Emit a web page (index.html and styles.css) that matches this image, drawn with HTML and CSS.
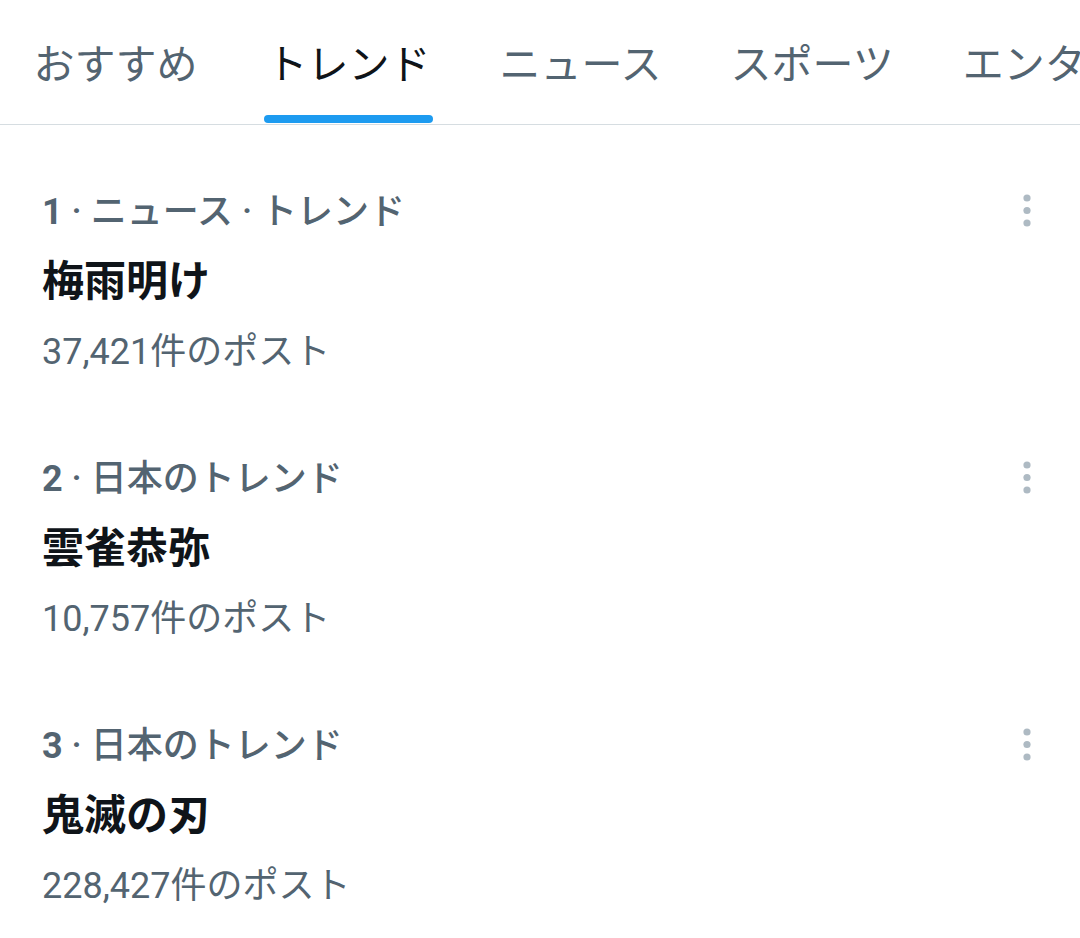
FILE: index.html
```html
<!DOCTYPE html>
<html lang="ja">
<head>
<meta charset="utf-8">
<link rel="stylesheet" href="styles.css">
</head>
<body>
<nav class="tabs">
  <div class="tab"><span class="label">おすすめ</span></div>
  <div class="tab active"><span class="label">トレンド<span class="bar"></span></span></div>
  <div class="tab"><span class="label">ニュース</span></div>
  <div class="tab"><span class="label">スポーツ</span></div>
  <div class="tab"><span class="label">エンタメ</span></div>
</nav>
<main class="list">
  <section class="trend">
    <div class="body">
      <div class="meta"><span class="rank">1</span> · ニュース · トレンド</div>
      <div class="title">梅雨明け</div>
      <div class="count">37,421件のポスト</div>
    </div>
    <svg class="more" width="14" height="70" viewBox="0 0 14 70"><circle cx="7" cy="21" r="3.6"/><circle cx="7" cy="33.5" r="3.6"/><circle cx="7" cy="46" r="3.6"/></svg>
  </section>
  <section class="trend">
    <div class="body">
      <div class="meta"><span class="rank">2</span> · 日本のトレンド</div>
      <div class="title">雲雀恭弥</div>
      <div class="count">10,757件のポスト</div>
    </div>
    <svg class="more" width="14" height="70" viewBox="0 0 14 70"><circle cx="7" cy="21" r="3.6"/><circle cx="7" cy="33.5" r="3.6"/><circle cx="7" cy="46" r="3.6"/></svg>
  </section>
  <section class="trend">
    <div class="body">
      <div class="meta"><span class="rank">3</span> · 日本のトレンド</div>
      <div class="title">鬼滅の刃</div>
      <div class="count">228,427件のポスト</div>
    </div>
    <svg class="more" width="14" height="70" viewBox="0 0 14 70"><circle cx="7" cy="21" r="3.6"/><circle cx="7" cy="33.5" r="3.6"/><circle cx="7" cy="46" r="3.6"/></svg>
  </section>
</main>
</body>
</html>
```
FILE: styles.css
```css
html, body {
  margin: 0;
  padding: 0;
  background: #ffffff;
}
body {
  font-family: Roboto, "Noto Sans CJK JP", "Noto Sans", sans-serif;
  color: #0f1419;
  width: 1080px;
  height: 938px;
  overflow: hidden;
}
.tabs {
  display: flex;
  height: 124px;
  border-bottom: 1px solid #d6dde1;
  overflow: hidden;
}
.tab {
  flex-shrink: 0;
  padding: 0 34.5px;
  display: flex;
  flex-direction: column;
  align-items: center;
  white-space: nowrap;
}
.label {
  display: flex;
  flex-direction: column;
  align-items: center;
  height: 124px;
  box-sizing: border-box;
  padding-top: 40px;
  font-size: 41px;
  line-height: 50px;
  color: #536471;
}
.tab:first-child .label {
  margin-left: -1px;
}
.active .label {
  color: #0f1419;
}
.bar {
  display: block;
  margin-top: auto;
  margin-bottom: 1px;
  align-self: stretch;
  margin-left: -3px;
  margin-right: -2px;
  height: 8px;
  border-radius: 4px;
  background: #1d9bf0;
}
.list {
  padding-top: 24px;
}
.trend {
  display: flex;
  padding: 28px 46px 29px 42px;
}
.body {
  flex: 1;
}
.meta {
  font-size: 36px;
  line-height: 70px;
  font-weight: 500;
  color: #536471;
  white-space: nowrap;
}
.rank {
  font-weight: 700;
}
.title {
  font-size: 42px;
  line-height: 70px;
  font-weight: 700;
  color: #0f1419;
}
.count {
  font-size: 36px;
  line-height: 70px;
  color: #536471;
}
.more {
  flex-shrink: 0;
  fill: #aebac3;
}
```
